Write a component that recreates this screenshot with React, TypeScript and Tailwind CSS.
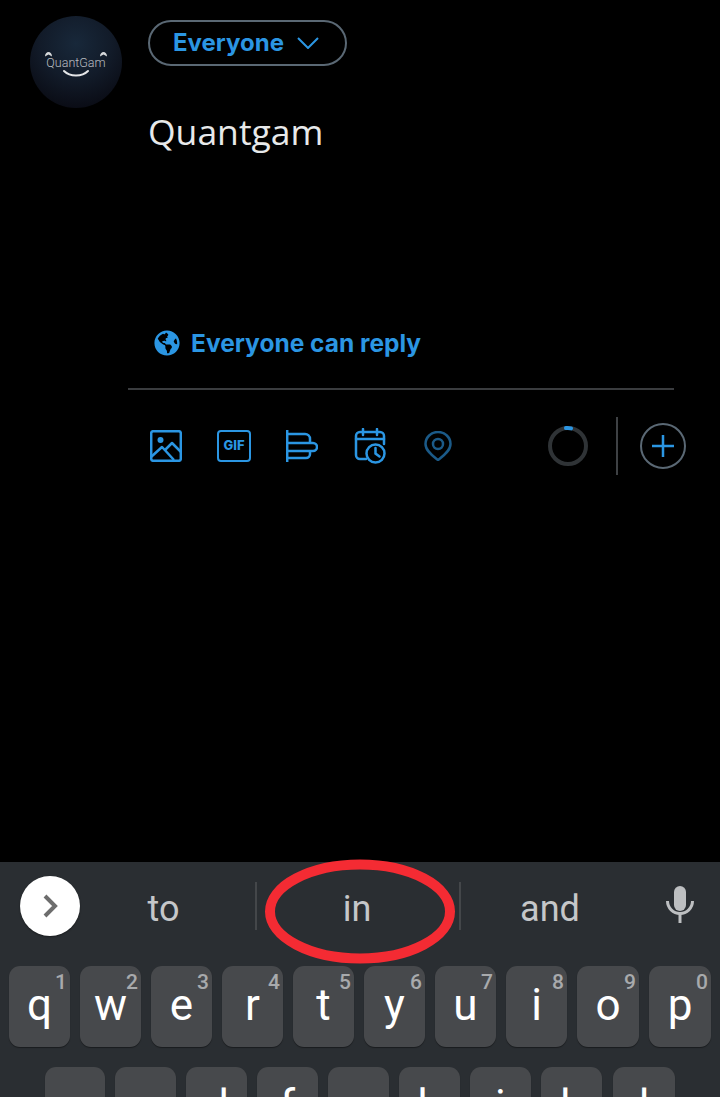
import { FaGlobeAmericas } from "react-icons/fa"

const blue = "#2b96e3"

const topRow = [
  { key: "q", hint: "1" },
  { key: "w", hint: "2" },
  { key: "e", hint: "3" },
  { key: "r", hint: "4" },
  { key: "t", hint: "5" },
  { key: "y", hint: "6" },
  { key: "u", hint: "7" },
  { key: "i", hint: "8" },
  { key: "o", hint: "9", wide: true },
  { key: "p", hint: "0", wide: true },
]

const homeRow = ["a", "s", "d", "f", "g", "h", "j", "k", "l"]

function Key({ label, hint, className }: { label: string; hint?: string; className: string }) {
  return (
    <div className={`relative h-[81px] shrink-0 rounded-[11px] bg-[#47494c] pt-[17px] text-center font-['Roboto',sans-serif] text-[44px] leading-[44px] text-white shadow-[0_1px_1px_rgba(0,0,0,0.4)] ${className}`}>
      {label}
      {hint && (
        <span className="absolute right-[3px] top-[6px] text-[21px] leading-[21px] font-medium text-[#a8aaac]">{hint}</span>
      )}
    </div>
  )
}

function Avatar() {
  return (
    <div className="relative flex h-[92px] w-[92px] shrink-0 flex-col items-center overflow-hidden rounded-full bg-[radial-gradient(circle_at_50%_30%,#18283a_0%,#121b29_45%,#0a0c15_82%,#07080d_100%)]">
      <span className="mt-[39px] font-['Roboto',sans-serif] text-[12.5px] leading-[15px] font-light text-[#b9bcc0]">QuantGam</span>
      <svg width="92" height="92" viewBox="0 0 92 92" fill="none" className="absolute left-0 top-0">
        <path d="M15 40.500c0-6 7-6 7 0l-3.500-2z" fill="#d8dadc" />
        <path d="M70 40.500c0-6 7-6 7 0l-3.500-2z" fill="#d8dadc" />
        <path d="M34 55c6 6 18 6 24 0" stroke="#e4e5e7" strokeWidth="2" strokeLinecap="round" />
      </svg>
    </div>
  )
}

function ImageIcon() {
  return (
    <svg width="32" height="32" viewBox="0 0 32 32" fill="none" stroke={blue} strokeWidth="2.500" strokeLinejoin="round">
      <rect x="1.200" y="1.200" width="29.600" height="29.600" rx="2" />
      <circle cx="10.500" cy="10" r="3" fill={blue} stroke="none" />
      <path d="M1 27l11-10 12 13" />
      <path d="M15 20l7-7 9 9" />
    </svg>
  )
}

function PollIcon() {
  return (
    <svg width="32" height="32" viewBox="0 0 32 32" fill="none" stroke={blue} strokeWidth="2.500">
      <path d="M1.200 0v32" />
      <path d="M1 4h18a5 5 0 0 1 5 5v4" />
      <path d="M1 13h26a4 4 0 0 1 0 8H1" />
      <path d="M24 21v3a4 4 0 0 1-4 4H1" />
    </svg>
  )
}

function CalendarIcon() {
  return (
    <svg width="32" height="36" viewBox="0 0 32 36" fill="none" stroke={blue} strokeWidth="2.500" strokeLinecap="round">
      <path d="M12 31H6a4 4 0 0 1-4-4V8a4 4 0 0 1 4-4h20a4 4 0 0 1 4 4v8" />
      <path d="M2 11h28" />
      <path d="M9 1v6M23 1v6" />
      <circle cx="21.500" cy="25.500" r="9" />
      <path d="M21.500 20v5.500l4 3" />
    </svg>
  )
}

function PinIcon() {
  return (
    <svg width="28" height="30" viewBox="0 0 28 30" fill="none" stroke="#1b5a88" strokeWidth="2.500">
      <path d="M14 29C9 25 1.500 20 1.500 13a12.500 12 0 0 1 25 0c0 7-7.500 12-12.500 16z" />
      <circle cx="14" cy="13" r="5" />
    </svg>
  )
}

function App() {
  return (
    <div className="relative flex h-[1097px] w-[720px] flex-col overflow-hidden bg-black">
      {/* Composer */}
      <div className="h-[862px] shrink-0">
        <div className="flex pl-[30px] pt-4">
          <Avatar />
          <div className="ml-[26px] flex flex-col items-start pt-1">
            <div className="flex h-[46px] w-[199px] items-center rounded-full border-2 border-[#5a6874] pl-[23px] font-['Inter',sans-serif] text-[24px] font-bold text-[#2b96e3]">
              Everyone
              <svg width="22" height="12" viewBox="0 0 22 12" fill="none" stroke={blue} strokeWidth="2" className="ml-[13px]">
                <path d="M1 1l10 10L21 1" />
              </svg>
            </div>
            <div className="mt-[41px] font-['Open_Sans',sans-serif] text-[35.500px] leading-[48px] text-[#e7e9ea]">Quantgam</div>
          </div>
        </div>

        <div className="mt-[173px] flex items-center pl-[154px]">
          <FaGlobeAmericas size={26} color={blue} />
          <span className="ml-[11px] font-['Inter',sans-serif] text-[24.500px] leading-[30px] font-bold text-[#2b96e3]">Everyone can reply</span>
        </div>

        <div className="ml-[128px] mt-[30px] h-[2px] w-[546px] bg-[#3a3c3f]" />

        <div className="mt-[27px] flex h-[58px] items-center pl-[150px]">
          <ImageIcon />
          <div className="ml-[35px] flex h-[32px] w-[34px] items-center justify-center rounded-[4px] border-[2.500px] border-[#2b96e3] font-['Inter',sans-serif] text-[13px] font-extrabold text-[#2b96e3]">GIF</div>
          <div className="ml-[35px]"><PollIcon /></div>
          <div className="ml-[36px]"><CalendarIcon /></div>
          <div className="ml-[38px]"><PinIcon /></div>
          <svg width="40" height="40" viewBox="0 0 40 40" fill="none" className="ml-[96px]">
            <circle cx="20" cy="20" r="18" stroke="#2f3336" strokeWidth="4" />
            <path d="M18 2.100a18 18 0 0 1 5 .3" stroke={blue} strokeWidth="4" strokeLinecap="round" />
          </svg>
          <div className="ml-[28px] h-[58px] w-[2px] bg-[#3e4144]" />
          <div className="ml-[22px] flex h-[46px] w-[46px] items-center justify-center rounded-full border-2 border-[#5a6874]">
            <svg width="22" height="22" viewBox="0 0 22 22" stroke={blue} strokeWidth="2.500">
              <path d="M11 0v22M0 11h22" />
            </svg>
          </div>
        </div>
      </div>

      {/* Keyboard */}
      <div className="flex-1 bg-[#2a2e32]">
        <div className="flex h-[104px] items-start font-['Roboto',sans-serif] text-[36px] text-[#c5c7c9]">
          <div className="ml-5 mt-[14px] flex h-[60px] w-[60px] shrink-0 items-center justify-center rounded-full bg-white shadow-[0_1px_2px_rgba(0,0,0,0.4)]">
            <svg width="16" height="24" viewBox="0 0 16 24" fill="none" stroke="#6d6d6d" strokeWidth="4">
              <path d="M3 2l10 10L3 22" />
            </svg>
          </div>
          <div className="ml-[-8px] mt-[20px] flex h-[48px] w-[183px] items-center justify-center pt-[5px]">to</div>
          <div className="mt-[20px] h-[48px] w-[2px] bg-[#44474a]" />
          <div className="mt-[20px] flex h-[48px] w-[202px] items-center justify-center pr-[2px] pt-[5px]">in</div>
          <div className="mt-[20px] h-[48px] w-[2px] bg-[#44474a]" />
          <div className="mt-[20px] flex h-[48px] w-[178px] items-center justify-center pt-[5px]">and</div>
          <svg width="28" height="37" viewBox="0 0 28 37" fill="none" className="ml-[27px] mt-6">
            <rect x="8" y="0" width="12" height="25" rx="6" fill="#bdbfc1" />
            <path d="M1.500 15a12.500 12.500 0 0 0 25 0" stroke="#bdbfc1" strokeWidth="3" />
            <path d="M14 27v10" stroke="#bdbfc1" strokeWidth="3" />
          </svg>
        </div>

        <div className="flex gap-[10px] pl-[9px]">
          {topRow.map((k) => (
            <Key key={k.key} label={k.key} hint={k.hint} className={k.wide ? "w-[62px]" : "w-[61px]"} />
          ))}
        </div>

        <div className="mt-[20px] flex gap-[10px] pl-[45px]">
          {homeRow.map((k) => (
            <Key key={k} label={k} className={k === "a" ? "w-[60px]" : k === "l" ? "ml-px w-[62px]" : "w-[61px]"} />
          ))}
        </div>
      </div>

      {/* Red annotation round the middle suggestion */}
      <svg width="200" height="112" viewBox="0 0 200 112" fill="none" className="absolute left-[260px] top-[856px]">
        <ellipse cx="100" cy="55.500" rx="90" ry="47" stroke="#f42b33" strokeWidth="10" />
      </svg>
    </div>
  )
}

export default App
